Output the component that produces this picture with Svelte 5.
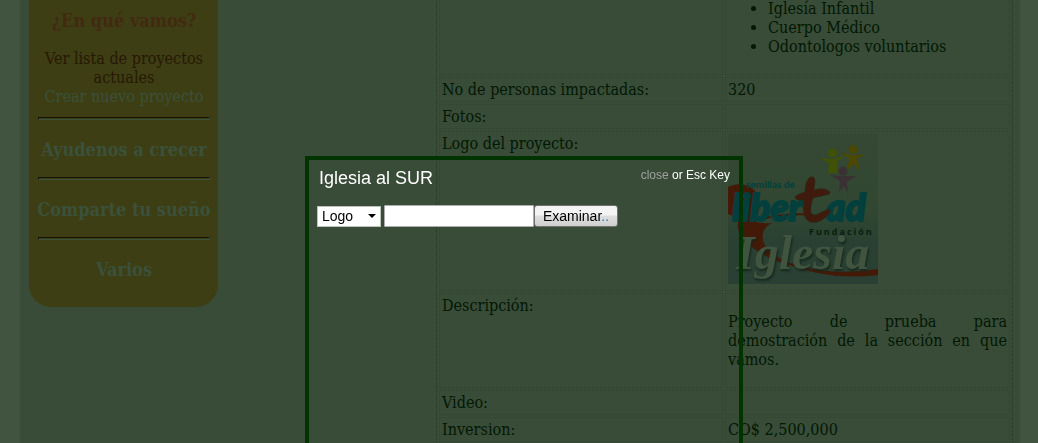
<script lang="ts">
  const team = ['Iglesía Infantil', 'Cuerpo Médico', 'Odontologos voluntarios'];
  const sections = ['Ayudenos a crecer', 'Comparte tu sueño', 'Varios'];
  let kind = $state('Logo');
  let fileName = $state('');
</script>

<div class="page">
  <div class="content">
    <nav class="sidebar">
      <h2 class="current">¿En qué vamos?</h2>
      <div class="links">
        <a class="active" href="#lista">Ver lista de proyectos actuales</a>
        <a href="#nuevo">Crear nuevo proyecto</a>
      </div>
      {#each sections as section}
        <hr />
        <h2>{section}</h2>
      {/each}
    </nav>

    <table>
      <colgroup><col class="labels" /><col /></colgroup>
      <tbody>
        <tr>
          <td></td>
          <td>
            <ul>
              {#each team as member}<li>{member}</li>{/each}
            </ul>
          </td>
        </tr>
        <tr><td>No de personas impactadas:</td><td>320</td></tr>
        <tr><td>Fotos:</td><td></td></tr>
        <tr>
          <td>Logo del proyecto:</td>
          <td>
            <svg class="logo" viewBox="0 0 150 150" role="img" aria-label="Semillas de Libertad">
              <defs>
                <linearGradient id="sky" x1="0" y1="0" x2="0" y2="1">
                  <stop offset="0" stop-color="#344833" />
                  <stop offset=".5" stop-color="#324732" />
                  <stop offset=".72" stop-color="#2a4032" />
                  <stop offset="1" stop-color="#2a4034" />
                </linearGradient>
              </defs>
              <rect width="150" height="150" fill="url(#sky)" />
              <path fill="#431a08" d="M0 53C14 46 29 53 31 66C33 79 26 84 23 86Q30 90 44 89C33 94 32 106 39 114C48 124 62 130 80 134Q112 141 150 135V141C112 146 82 138 68 133C47 128 27 119 18 106C10 100 8 92 11 85L0 80Z" />
              <path fill="none" stroke="#431a08" stroke-width="2" d="M22 88Q55 78 86 81" />
              <g fill="#3f5206">
                <circle cx="104.500" cy="19" r="4.500" />
                <path d="M91 24L102 25H107L119 20L109 28L110 38L100 40L101 29Z" />
              </g>
              <g fill="#4a4804">
                <circle cx="125" cy="15.500" r="4.500" />
                <path d="M112 18L122 21H128L138 20L129 25L132 38L126 30L119 36L121 25Z" />
              </g>
              <g fill="#3b3034">
                <circle cx="115" cy="37" r="4.500" />
                <path d="M102 41L112 42H119L128 42L119 48L120 60L116 52L111 58L112 47Z" />
              </g>
              <g class="brand">
                <text class="small" x="18" y="54">semillas de</text>
                <text class="word" x="4" y="87">liber</text>
                <text class="word" x="98" y="87">ad</text>
              </g>
              <path fill="#401a0d" stroke="#252d19" stroke-width=".6" d="M82 43Q87 42 87 47L86 56Q95 53 101 57Q104 60 98 61L85 64Q81 75 84 82Q91 80 98 76Q105 74 101 80Q91 91 82 88Q73 84 76 66Q67 67 67 63Q69 60 77 58Q77 47 82 43Z" />
              <text class="foundation" x="81" y="101">Fundación</text>
              <text class="script" x="8" y="135">Iglesia</text>
            </svg>
          </td>
        </tr>
        <tr>
          <td>Descripción:</td>
          <td><p>Proyecto de prueba para demostración de la sección en que vamos.</p></td>
        </tr>
        <tr><td>Video:</td><td></td></tr>
        <tr><td>Inversion:</td><td>CO$ 2,500,000</td></tr>
        <tr><td></td><td></td></tr>
      </tbody>
    </table>
  </div>
</div>

<div class="modal" role="dialog" aria-labelledby="dialog-title">
  <header>
    <h1 id="dialog-title">Iglesia al SUR</h1>
    <div class="dismiss"><a href="#close">close</a> or Esc Key</div>
  </header>
  <form>
    <select aria-label="Tipo de archivo" bind:value={kind}>
      <option>Logo</option>
      <option>Foto</option>
    </select>
    <input type="text" aria-label="Archivo" bind:value={fileName} />
    <button type="button">Examinar<span>..</span></button>
  </form>
</div>

<style>
  :global(body) {
    margin: 0;
    overflow: hidden;
    background: #40543f;
  }
  .page {
    height: 100vh;
    overflow: hidden;
    padding: 0 18px 0 20px;
    font: 16px/19px "DejaVu Serif Condensed", "DejaVu Serif", serif;
    color: #021803;
  }
  .page, .page * {
    box-sizing: border-box;
  }
  .content {
    display: flex;
    justify-content: space-between;
    align-items: flex-start;
    min-height: 100%;
    padding: 0 7px 0 9px;
    background: #394c38;
  }
  .sidebar {
    width: 189px;
    padding: 11px 8px 27px 9px;
    border-radius: 0 0 22px 22px;
    background: #3d3e14;
    text-align: center;
  }
  h2 {
    margin: 0 -8px;
    font-size: 18px;
    line-height: 20px;
    color: #3b513b;
    white-space: nowrap;
  }
  h2.current {
    color: #422a11;
  }
  .links {
    margin: 18px 0 11px;
  }
  .links a {
    display: block;
    color: #3b513b;
    text-decoration: none;
    margin: 0 -4px;
  }
  .links a.active {
    color: #281803;
    margin: 0;
  }
  hr {
    margin: 0 0 20px;
    height: 3px;
    border: 1px solid;
    border-color: #151304 #3b513b #3b513b #151304;
  }
  h2 + hr {
    margin-top: 17px;
  }
  table {
    width: 577px;
    margin-top: -7px;
    table-layout: fixed;
    border: 1px dotted #263625;
    border-spacing: 2px;
  }
  .labels {
    width: 284px;
  }
  td {
    height: 25px;
    padding: 2px;
    border: 1px dotted #31442f;
    vertical-align: top;
  }
  ul {
    margin: 0 0 16px;
    padding-left: 40px;
  }
  p {
    margin: 16px 0;
    text-align: justify;
  }
  .logo {
    display: block;
    width: 150px;
    height: 150px;
    margin-bottom: 4px;
  }
  .brand {
    fill: #033f3d;
    stroke: #033f3d;
    font-family: Lato, sans-serif;
    font-weight: 900;
  }
  .small {
    font-size: 10px;
    stroke-width: 0;
  }
  .word {
    font-size: 37px;
    font-style: italic;
    stroke-width: 2;
  }
  .foundation {
    font: bold 9px "Open Sans", sans-serif;
    letter-spacing: 2px;
    fill: #071e0c;
  }
  .script {
    font: italic bold 48px "Liberation Serif", serif;
    fill: #405440;
    filter: drop-shadow(1px 2px 1px #14271a);
  }
  .modal {
    position: fixed;
    top: 156px;
    bottom: -4px;
    left: calc(50% - 214px);
    width: 438px;
    box-sizing: border-box;
    border: 4px solid #030;
    padding: 8px 9px 0 8px;
    font-family: "Liberation Sans", Arial, sans-serif;
    color: #fff;
  }
  header {
    display: flex;
    justify-content: space-between;
    padding-left: 2px;
  }
  h1 {
    margin: 0;
    font-size: 18px;
    line-height: 20px;
    font-weight: 400;
  }
  .dismiss {
    font-size: 12px;
    line-height: 14px;
  }
  .dismiss a {
    color: #a0a0a0;
    text-decoration: none;
  }
  form {
    display: flex;
    align-items: center;
    margin-top: 17px;
  }
  select, input, button {
    box-sizing: border-box;
    margin: 0;
    font: 14px "Liberation Sans", Arial, sans-serif;
    color: #000;
  }
  select {
    appearance: none;
    width: 64px;
    height: 21px;
    padding: 0 4px;
    border: 1px solid #bcc2bc;
    border-radius: 0;
    background: #fff url("data:image/svg+xml,%3Csvg xmlns='http://www.w3.org/2000/svg' width='8' height='4'%3E%3Cpath d='M0 0h8L4 4z'/%3E%3C/svg%3E") no-repeat right 4px center;
  }
  input {
    width: 150px;
    height: 22px;
    margin-left: 3px;
    border: 1px solid #abadb3;
    border-radius: 1px;
    background: #fff;
  }
  button {
    width: 84px;
    height: 22px;
    padding: 0;
    border: 1px solid #707070;
    border-radius: 3px;
    background: linear-gradient(#f4f4f4 45%, #dedede 50%, #cfcfcf);
  }
  button span {
    color: #2a7db8;
  }
</style>
